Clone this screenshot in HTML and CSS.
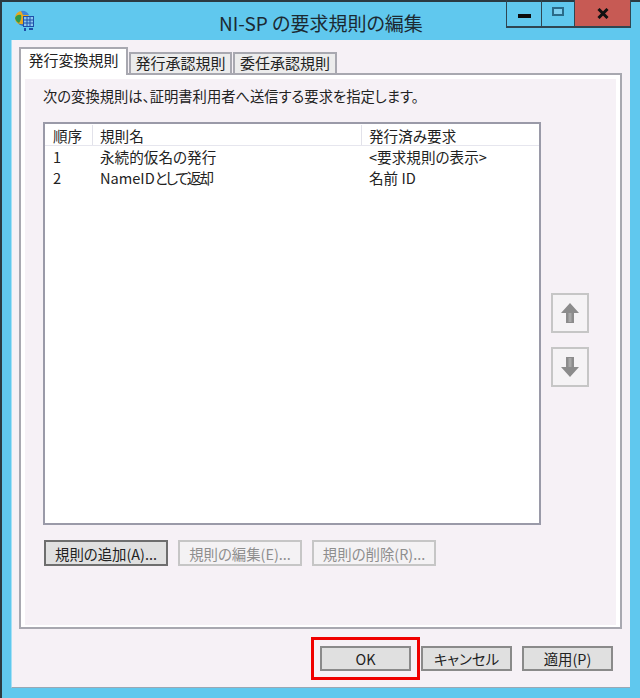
FILE: index.html
```html
<!DOCTYPE html>
<html lang="ja">

<head>
    <meta charset="UTF-8">
    <title>NI-SP の要求規則の編集</title>
    <link rel="stylesheet" href="styles.css">
</head>

<body>
    <div class="window">
        <div class="titlebar">
            <svg class="app-icon" width="22" height="22" viewBox="0 0 22 22">
                <circle cx="8" cy="8" r="7" fill="#e8a820"/>
                <path d="M1 8 Q3 4 7 5 Q8 9 5 13 Q2 12 1 8Z" fill="#2f9a4a"/>
                <path d="M7 1 Q12 0 15 5 L9 5Z" fill="#3f86d8"/>
                <path d="M4 13 Q7 15 9 14 V16 Q6 16 4 13Z" fill="#2a68c0"/>
                <rect x="9.500" y="6.500" width="10" height="10" fill="#8cc8f0" stroke="#1f4fa8"/>
                <path d="M9.500 10H19.500M9.500 13H19.500M13 6.500V16.500M16 6.500V16.500" stroke="#1f4fa8" fill="none"/>
                <rect x="10" y="18" width="2" height="3" fill="#1f4fa8"/>
                <rect x="15" y="18" width="4" height="2" fill="#1f4fa8"/>
            </svg>
            <div class="title">NI-SP の要求規則の編集</div>
            <div class="win-controls">
                <div class="win-btn btn-min"><span class="min-glyph"></span></div>
                <div class="win-btn btn-max"><span class="max-glyph"></span></div>
                <div class="win-btn btn-close">
                    <svg width="12" height="11" viewBox="0 0 12 11">
                        <path d="M1.500 1 L10.500 10 M10.500 1 L1.500 10" stroke="#111" stroke-width="3" fill="none"/>
                    </svg>
                </div>
            </div>
        </div>

        <div class="client">
            <div class="tabs">
                <div class="tab active">発行変換規則</div>
                <div class="tab">発行承認規則</div>
                <div class="tab">委任承認規則</div>
            </div>

            <div class="panel">
                <div class="panel-inner">
                    <p class="intro">次の変換規則は、証明書利用者へ送信する要求を指定します。</p>

                    <div class="rules-area">
                        <div class="list">
                            <div class="row list-head">
                                <div class="col-order">順序</div>
                                <div class="col-name">規則名</div>
                                <div class="col-claim">発行済み要求</div>
                            </div>
                            <div class="row">
                                <div class="col-order">1</div>
                                <div class="col-name">永続的仮名の発行</div>
                                <div class="col-claim">&lt;要求規則の表示&gt;</div>
                            </div>
                            <div class="row">
                                <div class="col-order">2</div>
                                <div class="col-name">NameID<span class="tight">として返却</span></div>
                                <div class="col-claim">名前 ID</div>
                            </div>
                        </div>

                        <div class="move-btns">
                            <div class="move-btn">
                                <svg width="20" height="22" viewBox="0 0 20 22">
                                    <path d="M10 1 L19 11 H14 V21 H6 V11 H1Z" fill="#8c8c8c"/>
                                    <path d="M8.500 11 H11.500 V20 H8.500Z" fill="#a8a8a8"/>
                                </svg>
                            </div>
                            <div class="move-btn">
                                <svg width="20" height="22" viewBox="0 0 20 22">
                                    <path d="M10 21 L19 11 H14 V1 H6 V11 H1Z" fill="#8c8c8c"/>
                                    <path d="M8.500 2 H11.500 V11 H8.500Z" fill="#a8a8a8"/>
                                </svg>
                            </div>
                        </div>
                    </div>

                    <div class="rule-btns">
                        <div class="btn rule-btn">規則の追加(A)...</div>
                        <div class="btn rule-btn disabled">規則の編集(E)...</div>
                        <div class="btn rule-btn disabled">規則の削除(R)...</div>
                    </div>
                </div>
            </div>

            <div class="dialog-btns">
                <div class="btn dialog-btn ok">OK</div>
                <div class="btn dialog-btn">キャンセル</div>
                <div class="btn dialog-btn">適用(P)</div>
            </div>
        </div>
    </div>
</body>

</html>
```

FILE: styles.css
```css
body {
    margin: 0;
    padding: 0;
    overflow: hidden;
    font-family: "Noto Sans CJK JP", "Noto Sans", sans-serif;
    font-size: 14.4px;
    font-feature-settings: "palt";
    color: #222;
}

.window {
    width: 640px;
    height: 698px;
    box-sizing: border-box;
    display: flex;
    flex-direction: column;
    padding: 0 10px 10px 9px;
    background-color: #60c8ee;
    border-left: 2px solid #2b3a42;
    border-top: 2px solid #2b3a42;
}

/* title bar */
.titlebar {
    height: 38px;
    flex-shrink: 0;
    display: flex;
    align-items: flex-start;
    position: relative;
}

.app-icon {
    margin: 8px 0 0 3px;
}

.title {
    margin: 8px 0 0 183px;
    font-size: 19px;
    line-height: 26px;
    color: #1c2a33;
    white-space: nowrap;
}

.win-controls {
    position: absolute;
    top: -2px;
    right: -1px;
    display: flex;
}

.win-btn {
    height: 28px;
    box-sizing: border-box;
    display: flex;
    justify-content: center;
    align-items: center;
    border: 1px solid #2f4652;
    border-top: none;
    border-right: none;
    border-bottom-width: 2px;
}

.btn-min {
    width: 35px;
}

.btn-max {
    width: 33px;
}

.btn-close {
    width: 57px;
    background-color: #c75a54;
    border-right: 1px solid #2f4652;
}

.min-glyph {
    width: 13px;
    height: 4px;
    margin-top: 5px;
    background-color: #0c0c0c;
}

.max-glyph {
    width: 8px;
    height: 5px;
    margin-bottom: 3px;
    border: 2px solid #2a6a88;
    background-color: #7fcfef;
}

/* client area */
.client {
    flex: 1;
    display: flex;
    flex-direction: column;
    padding: 7px 8px 0 8px;
    background-color: #f6f1f6;
    border-left: 1px solid #a5e0f5;
    border-bottom: 1px solid #9aa8b4;
}

.tabs {
    display: flex;
    align-items: flex-end;
    margin-left: -1px;
    position: relative;
    z-index: 1;
    margin-bottom: -2px;
}

.tab {
    width: 103px;
    height: 21px;
    box-sizing: border-box;
    margin-bottom: 2px;
    margin-right: 1px;
    text-align: center;
    line-height: 17px;
    font-size: 15px;
    background-color: #ececec;
    border: 2px solid #a8a8b0;
    border-bottom: none;
}

.tab:last-child {
    width: 104px;
}

.tab.active {
    width: 109px;
    height: 28px;
    margin-bottom: 0;
    line-height: 22px;
    background-color: #fff;
}

.panel {
    width: 603px;
    height: 556px;
    box-sizing: border-box;
    margin-left: -1px;
    border: 2px solid #a8a8b0;
}

.panel-inner {
    height: 100%;
    box-sizing: border-box;
    display: flex;
    flex-direction: column;
    padding: 0 18px;
    background-color: #f6f1f6;
    border: 4px solid #fff;
    border-bottom-width: 2px;
}

.intro {
    margin: 6px 0 15px 0;
    line-height: 22px;
    font-size: 14.300px;
}

/* rule list */
.rules-area {
    display: flex;
    gap: 10px;
}

.list {
    width: 498px;
    height: 403px;
    box-sizing: border-box;
    padding-top: 1px;
    background-color: #fff;
    border: 2px solid #9a9aa8;
}

.row {
    display: flex;
    height: 21px;
    line-height: 21px;
    font-size: 14.600px;
}

.tight {
    letter-spacing: -2px;
}

.list-head {
    height: 20px;
    border-bottom: 1px solid #e6e6ee;
}

.col-order {
    width: 48px;
    padding-left: 8px;
    box-sizing: border-box;
}

.col-name {
    width: 269px;
    padding-left: 7px;
    box-sizing: border-box;
}

.col-claim {
    flex: 1;
    padding-left: 7px;
    box-sizing: border-box;
}

.list-head .col-order,
.list-head .col-name {
    border-right: 1px solid #e2e2ea;
}

.move-btns {
    display: flex;
    flex-direction: column;
    gap: 14px;
    padding-top: 171px;
}

.move-btn {
    width: 38px;
    height: 40px;
    box-sizing: border-box;
    display: flex;
    justify-content: center;
    align-items: center;
    background-color: #f5f3f5;
    border: 2px solid #c6c6c6;
}

/* buttons */
.btn {
    height: 26px;
    box-sizing: border-box;
    display: flex;
    justify-content: center;
    align-items: center;
    background-color: #e0e0e0;
    border: 2px solid #8a8a8a;
    white-space: nowrap;
}

.rule-btns {
    display: flex;
    gap: 10px;
    margin: 15px 0 0 1px;
}

.rule-btn {
    width: 124px;
}

.rule-btn:first-child {
    border-color: #6e6e6e;
}

.rule-btn.disabled {
    color: #8e8e8e;
    background-color: #f4f2f4;
    border-color: #c6c6c6;
}

.dialog-btns {
    display: flex;
    justify-content: flex-end;
    gap: 10px;
    margin: 17px 9px 0 0;
}

.dialog-btn {
    width: 91px;
    height: 25px;
}

/* 赤枠 */
.dialog-btn.ok {
    outline: 3px solid #f00000;
    outline-offset: 6px;
}
```
